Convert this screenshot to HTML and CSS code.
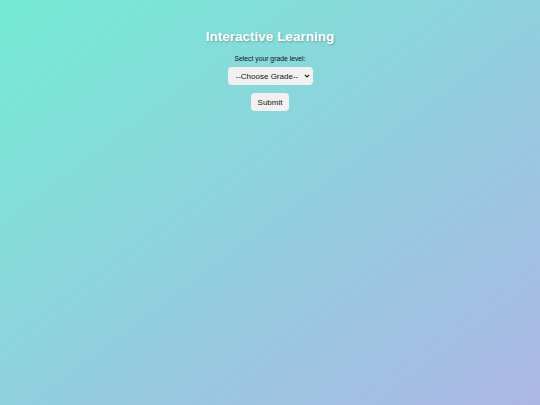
FILE: index.html
```html
<!DOCTYPE html>
<html>
<head>
<meta charset="utf-8">
<link rel="stylesheet" href="styles.css">
</head>
<body>
<div class="container">
  <h1 class="title">Interactive Learning</h1>
  <label class="label" for="grade">Select your grade level:</label>
  <div class="select-wrap">
    <select id="grade" class="select">
      <option>--Choose Grade--</option>
    </select>
    <svg class="chev" width="6" height="4" viewBox="0 0 6 4"><path d="M0.8 0.8 L3 3 L5.2 0.8" fill="none" stroke="#222" stroke-width="1.2"/></svg>
  </div>
  <button class="btn">Submit</button>
</div>
</body>
</html>
```
FILE: styles.css
```css
html, body {
  margin: 0;
  padding: 0;
  height: 100%;
}
body {
  background: linear-gradient(to bottom right, #74ebd5, #acb6e5);
  font-family: "Liberation Sans", Arial, sans-serif;
}
.container {
  display: flex;
  flex-direction: column;
  align-items: center;
  padding-top: 28px;
}
.title {
  margin: 0;
  font-size: 13.5px;
  line-height: 18px;
  font-weight: bold;
  color: #ffffff;
  text-shadow: 1px 1px 2px rgba(0,0,0,0.25);
}
.label {
  margin-top: 9px;
  font-size: 6.8px;
  line-height: 8px;
  color: #111;
}
.select-wrap {
  position: relative;
  margin-top: 4px;
  width: 85px;
  height: 18px;
}
.select {
  display: block;
  -webkit-appearance: none;
  appearance: none;
  width: 85px;
  height: 18px;
  font-family: "Liberation Sans", Arial, sans-serif;
  font-size: 8px;
  color: #111;
  background: #f1f1f1;
  border: none;
  border-radius: 4px;
  padding: 0 0 0 8px;
  margin: 0;
}
.chev {
  position: absolute;
  right: 3px;
  top: 7px;
  pointer-events: none;
}
.btn {
  margin-top: 8px;
  width: 38px;
  height: 18px;
  padding: 0;
  font-family: "Liberation Sans", Arial, sans-serif;
  font-size: 8px;
  color: #111;
  background: #f1f1f1;
  border: none;
  border-radius: 4px;
}
```
